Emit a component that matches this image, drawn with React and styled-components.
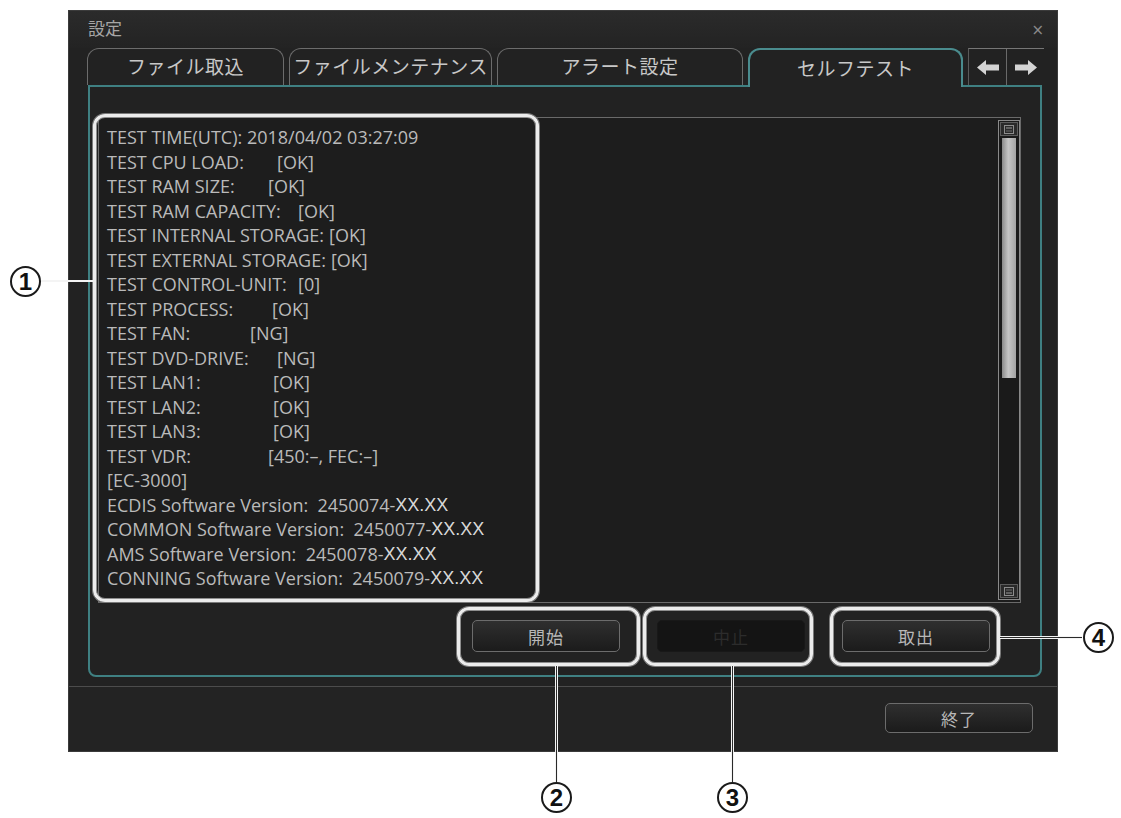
import React from "react";
import styled, { createGlobalStyle } from "styled-components";

const GlobalStyle = createGlobalStyle`
  html, body {
    margin: 0;
    padding: 0;
    background: #ffffff;
  }
  * {
    box-sizing: border-box;
  }
`;

const Stage = styled.div`
  position: relative;
  width: 1121px;
  height: 818px;
  padding: 10px 0 0 68px;
  overflow: hidden;
  font-family: "Noto Sans CJK JP", "Noto Sans", sans-serif;
`;

const Window = styled.div`
  width: 990px;
  height: 742px;
  background: #222222;
  border: 1px solid #3b3b3b;
  display: flex;
  flex-direction: column;
`;

const TitleBar = styled.div`
  height: 37px;
  display: flex;
  align-items: center;
  justify-content: space-between;
  padding: 0 13px 4px 19px;
  color: #a6a6a6;
  font-size: 17px;
  background: linear-gradient(#2b2b2b, #232323);
`;

const Close = styled.span`
  color: #8a8a8a;
  font-family: "DejaVu Sans", sans-serif;
  font-size: 15px;
  margin-top: 4px;
`;

const TabRow = styled.div`
  position: relative;
  z-index: 2;
  height: 37px;
  display: flex;
  align-items: flex-end;
  gap: 5px;
  padding-left: 18px;
`;

const Tab = styled.div`
  width: ${(p) => p.$w}px;
  height: ${(p) => (p.$active ? 39 : 37)}px;
  margin-bottom: ${(p) => (p.$active ? -2 : 0)}px;
  display: flex;
  align-items: center;
  justify-content: center;
  padding-bottom: 3px;
  border: ${(p) => (p.$active ? "2px solid #4a8c8e" : "1px solid #6c6c6c")};
  border-bottom: none;
  border-radius: 12px 12px 0 0;
  background: #222222;
  color: #c8c8c8;
  font-size: 19px;
  letter-spacing: 0.5px;
`;

const ArrowGroup = styled.div`
  width: 76px;
  height: 37px;
  display: flex;
  border-top: 1px solid #767676;
  border-left: 1px solid #5a5a5a;
`;

const ArrowButton = styled.div`
  flex: 1;
  display: flex;
  align-items: center;
  justify-content: center;
  & + & {
    border-left: 1px solid #6a6a6a;
  }
`;

const Panel = styled.div`
  height: 592px;
  margin: 0 15px 0 19px;
  display: flex;
  flex-direction: column;
  padding: 30px 19px 23px 8px;
  border: 2px solid #3f8082;
  border-radius: 0 0 8px 8px;
`;

const TextArea = styled.div`
  height: 486px;
  display: flex;
  border: 1px solid #6a6a6a;
  background: #1d1d1d;
`;

const Log = styled.div`
  flex: 1;
  padding: 7px 0 0 8px;
  font-family: "Open Sans", "Noto Sans", sans-serif;
  font-size: 18px;
  line-height: 24.5px;
  color: #bababa;
`;

const Line = styled.div`
  display: flex;
  white-space: pre;
`;

const Label = styled.span`
  min-width: ${(p) => p.$w}px;
  padding-right: 5px;
  flex-shrink: 0;
`;

const Suffix = styled.span`
  font-family: "Liberation Sans", sans-serif;
  color: #d8d8d8;
  font-size: 18px;
`;

const ScrollBar = styled.div`
  width: 22px;
  margin: 2px 0 2px 0;
  display: flex;
  flex-direction: column;
  border: 1px solid #8a8a8a;
  padding: 1px;
  background: #1a1a1a;
`;

const ScrollButton = styled.div`
  height: 14px;
  display: flex;
  align-items: center;
  justify-content: center;
  border: 1px solid #5c5c5c;
  background: #2a2a2a;
`;

const Thumb = styled.div`
  height: 240px;
  margin: 2px 2px 0;
  background: linear-gradient(90deg, #8a8a8a, #c6c6c6 45%, #a2a2a2);
`;

const Track = styled.div`
  flex: 1;
`;

const ButtonRow = styled.div`
  display: flex;
  justify-content: flex-end;
  gap: 37px;
  margin-top: 17px;
  padding-right: 31px;
`;

const Button = styled.div`
  width: 148px;
  height: ${(p) => p.$h || 32}px;
  display: flex;
  align-items: center;
  justify-content: center;
  border: 1px solid ${(p) => (p.$disabled ? "#181818" : "#6c6c6c")};
  border-radius: 5px;
  background: ${(p) =>
    p.$disabled ? "#141414" : "linear-gradient(#2f2f2f, #1b1b1b)"};
  color: ${(p) => (p.$disabled ? "#2c2c2c" : "#b8b8b8")};
  font-size: 17px;
  letter-spacing: 1px;
`;

const Footer = styled.div`
  flex: 1;
  margin-top: 9px;
  display: flex;
  justify-content: flex-end;
  align-items: flex-start;
  padding: 16px 24px 0 0;
  border-top: 1px solid #4c4c4c;
  background: #232323;
`;

/* annotation overlay */

const Highlight = styled.div`
  position: absolute;
  left: ${(p) => p.$x}px;
  top: ${(p) => p.$y}px;
  width: ${(p) => p.$w}px;
  height: ${(p) => p.$h}px;
  border: 3px solid #ececec;
  border-radius: 12px;
  box-shadow: inset 0 0 0 1px #8e8e8e, 0 0 0 1px #7a7a7a;
  pointer-events: none;
`;

const Leader = styled.div`
  position: absolute;
  left: ${(p) => p.$x}px;
  top: ${(p) => p.$y}px;
  width: ${(p) => p.$w}px;
  height: ${(p) => p.$h}px;
  background: #2a2a2a;
  border: 0 solid #f4f4f4;
  border-width: ${(p) => (p.$w > p.$h ? "1px 0" : "0 1px")};
`;

const Badge = styled.div`
  position: absolute;
  left: ${(p) => p.$x - 15}px;
  top: ${(p) => p.$y - 15}px;
  width: 31px;
  height: 31px;
  border-radius: 50%;
  border: 2px solid #1a1a1a;
  background: #ffffff;
  display: flex;
  align-items: center;
  justify-content: center;
  font-family: "Liberation Sans", sans-serif;
  font-weight: 700;
  font-size: 24px;
  color: #111;
`;

const LeftArrow = () => (
  <svg width="22" height="15" viewBox="0 0 22 15">
    <polygon points="0,7.5 9,0 9,4.5 22,4.5 22,10.5 9,10.5 9,15" fill="#d4d4d4" />
  </svg>
);

const RightArrow = () => (
  <svg width="22" height="15" viewBox="0 0 22 15">
    <polygon points="22,7.5 13,0 13,4.5 0,4.5 0,10.5 13,10.5 13,15" fill="#d4d4d4" />
  </svg>
);

const ScrollGlyph = ({ down }) => (
  <svg width="10" height="9" viewBox="0 0 10 9">
    <rect x="0.5" y="0.5" width="9" height="8" fill="none" stroke="#8c8c8c" />
    <line x1="2" y1={down ? 6 : 3} x2="8" y2={down ? 6 : 3} stroke="#9a9a9a" />
    <line x1="2" y1={down ? 3 : 6} x2="8" y2={down ? 3 : 6} stroke="#6a6a6a" />
  </svg>
);

const LOG_START = 107;

const results = [
  ["TEST CPU LOAD:", "[OK]", 277],
  ["TEST RAM SIZE:", "[OK]", 268],
  ["TEST RAM CAPACITY:", "[OK]", 298],
  ["TEST INTERNAL STORAGE:", "[OK]", 317],
  ["TEST EXTERNAL STORAGE:", "[OK]", 320],
  ["TEST CONTROL-UNIT:", "[0]", 298],
  ["TEST PROCESS:", "[OK]", 272],
  ["TEST FAN:", "[NG]", 250],
  ["TEST DVD-DRIVE:", "[NG]", 277],
  ["TEST LAN1:", "[OK]", 273],
  ["TEST LAN2:", "[OK]", 273],
  ["TEST LAN3:", "[OK]", 273],
  ["TEST VDR:", "[450:–, FEC:–]", 268],
];

const versions = [
  ["ECDIS Software Version:  2450074-", "XX.XX"],
  ["COMMON Software Version:  2450077-", "XX.XX"],
  ["AMS Software Version:  2450078-", "XX.XX"],
  ["CONNING Software Version:  2450079-", "XX.XX"],
];

const tabs = [
  { label: "ファイル取込", w: 197 },
  { label: "ファイルメンテナンス", w: 203 },
  { label: "アラート設定", w: 246 },
  { label: "セルフテスト", w: 215, active: true },
];

export default function App() {
  return (
    <>
      <GlobalStyle />
      <Stage>
        <Window>
          <TitleBar>
            <span>設定</span>
            <Close>×</Close>
          </TitleBar>

          <TabRow>
            {tabs.map((t) => (
              <Tab key={t.label} $w={t.w} $active={t.active}>
                {t.label}
              </Tab>
            ))}
            <ArrowGroup>
              <ArrowButton>
                <LeftArrow />
              </ArrowButton>
              <ArrowButton>
                <RightArrow />
              </ArrowButton>
            </ArrowGroup>
          </TabRow>

          <Panel>
            <TextArea>
              <Log>
                <Line>TEST TIME(UTC): 2018/04/02 03:27:09</Line>
                {results.map(([label, value, at]) => (
                  <Line key={label}>
                    <Label $w={at - LOG_START}>{label}</Label>
                    <span>{value}</span>
                  </Line>
                ))}
                <Line>[EC-3000]</Line>
                {versions.map(([text, suffix]) => (
                  <Line key={text}>
                    {text}
                    <Suffix>{suffix}</Suffix>
                  </Line>
                ))}
              </Log>
              <ScrollBar>
                <ScrollButton>
                  <ScrollGlyph />
                </ScrollButton>
                <Thumb />
                <Track />
                <ScrollButton>
                  <ScrollGlyph down />
                </ScrollButton>
              </ScrollBar>
            </TextArea>

            <ButtonRow>
              <Button>開始</Button>
              <Button $disabled>中止</Button>
              <Button>取出</Button>
            </ButtonRow>
          </Panel>

          <Footer>
            <Button $h={30}>終了</Button>
          </Footer>
        </Window>

        <Highlight $x={93} $y={114} $w={446} $h={488} />
        <Highlight $x={457} $y={607} $w={183} $h={59} />
        <Highlight $x={643} $y={607} $w={170} $h={59} />
        <Highlight $x={830} $y={607} $w={170} $h={59} />

        <Leader $x={40} $y={280} $w={53} $h={2} />
        <Leader $x={555} $y={666} $w={3} $h={116} />
        <Leader $x={731} $y={666} $w={3} $h={116} />
        <Leader $x={1000} $y={636} $w={82} $h={3} />

        <Badge $x={25} $y={281}>1</Badge>
        <Badge $x={556} $y={797}>2</Badge>
        <Badge $x={732} $y={797}>3</Badge>
        <Badge $x={1098} $y={637}>4</Badge>
      </Stage>
    </>
  );
}
